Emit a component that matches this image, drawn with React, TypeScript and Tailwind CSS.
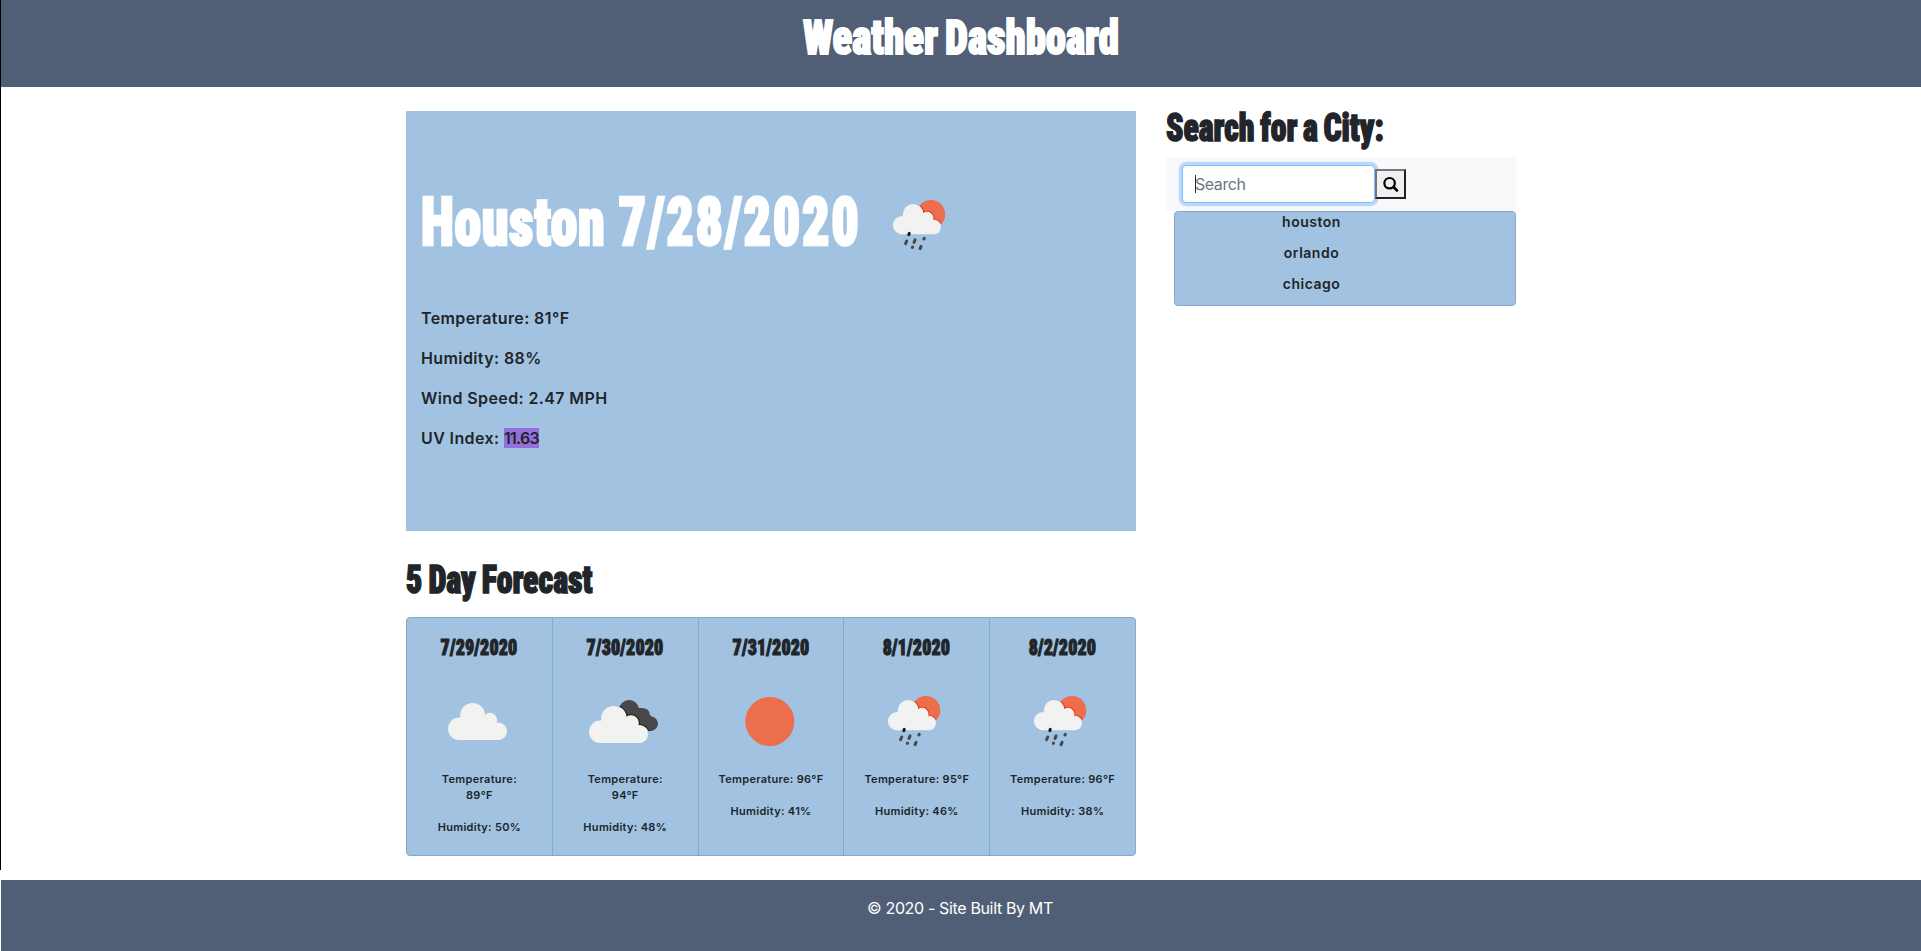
import type { ReactNode } from "react";

const display =
  "inline-block whitespace-nowrap font-['Roboto','Liberation_Sans',sans-serif] font-black [font-stretch:75%]";
const body = "font-['Inter','Liberation_Sans',sans-serif] font-semibold text-[#212529]";

function CloudShape({ fill }: { fill: string }) {
  return (
    <g fill={fill}>
      <circle cx="43.6" cy="43.3" r="12.4" />
      <circle cx="61" cy="48" r="7.2" />
      <circle cx="30.2" cy="56.8" r="11.2" />
      <circle cx="69.3" cy="59.3" r="8.7" />
      <path d="M31 45H56L65 50L70 54V68H30Z" />
    </g>
  );
}

function Box({ children }: { children: ReactNode }) {
  return (
    <svg className="block size-[100px] shrink-0" viewBox="0 0 100 100">
      {children}
    </svg>
  );
}

function CloudIcon() {
  return (
    <Box>
      <CloudShape fill="#f2f2f0" />
    </Box>
  );
}

function SunIcon() {
  return (
    <Box>
      <circle cx="48.8" cy="49.5" r="24.5" fill="#ec6e4c" />
    </Box>
  );
}

function BrokenCloudsIcon() {
  return (
    <Box>
      <clipPath id="dark-cloud">
        <circle cx="54" cy="38" r="10" />
        <circle cx="68.6" cy="42.3" r="6.1" />
        <circle cx="75.8" cy="51.7" r="7.2" />
        <path d="M54 36H68L77 45V58.9H60Z" />
      </clipPath>
      <g clipPath="url(#dark-cloud)">
        <rect width="100" height="100" fill="#48484a" />
        <g fill="none" stroke="#1f1f20" strokeWidth="3.4">
          <circle cx="38.6" cy="46.3" r="12.4" />
          <circle cx="56" cy="51" r="7.2" />
          <circle cx="64.3" cy="62.3" r="8.7" />
        </g>
        <g fill="none" stroke="#ffffff" strokeWidth="1.2">
          <circle cx="38.6" cy="46.3" r="12.4" />
          <circle cx="56" cy="51" r="7.2" />
          <circle cx="64.3" cy="62.3" r="8.7" />
        </g>
      </g>
      <g transform="translate(-5 3)">
        <CloudShape fill="#f2f2f0" />
      </g>
    </Box>
  );
}

function RainIcon({ id, shift = 0 }: { id: string; shift?: number }) {
  return (
    <Box>
      <g transform={`translate(${shift} 0)`}>
        <clipPath id={id}>
          <circle cx="60" cy="38.2" r="14.2" />
        </clipPath>
        <g clipPath={`url(#${id})`}>
          <rect width="100" height="100" fill="#ec6e4c" />
          <g transform="translate(6.5 3) scale(.813)" fill="none" stroke="#e03c1c" strokeWidth="3.6">
            <circle cx="43.6" cy="43.3" r="12.4" />
            <circle cx="61" cy="48" r="7.2" />
            <circle cx="69.3" cy="59.3" r="8.7" />
          </g>
          <g transform="translate(6.5 3) scale(.813)" fill="none" stroke="#ffffff" strokeWidth="1.2">
            <circle cx="43.6" cy="43.3" r="12.4" />
            <circle cx="61" cy="48" r="7.2" />
            <circle cx="69.3" cy="59.3" r="8.7" />
          </g>
        </g>
        <g transform="translate(6.5 3) scale(.813)">
          <CloudShape fill="#f2f2f2" />
        </g>
        <g stroke="#48484a" strokeWidth="3" strokeLinecap="round">
          <path d="M38.3 57.4L37.8 58.6" stroke="#1a1a1a" />
          <path d="M35.7 65L34.6 67.6M44.1 63.8L43 66.4M50.1 70.4L49.1 72.6" />
          <path d="M53.3 62.2L52.9 62.9M41.6 71L41.3 71.5" />
        </g>
      </g>
    </Box>
  );
}

const days = [
  { date: "7/29/2020", icon: <CloudIcon />, temp: "89°F", humidity: "50%", wrap: true },
  { date: "7/30/2020", icon: <BrokenCloudsIcon />, temp: "94°F", humidity: "48%", wrap: true },
  { date: "7/31/2020", icon: <SunIcon />, temp: "96°F", humidity: "41%", wrap: false },
  { date: "8/1/2020", icon: <RainIcon id="sun-day-4" shift={-1} />, temp: "95°F", humidity: "46%", wrap: false },
  { date: "8/2/2020", icon: <RainIcon id="sun-day-5" shift={-1} />, temp: "96°F", humidity: "38%", wrap: false },
];

function CurrentWeather() {
  return (
    <section className="h-[420px] bg-[#a1c3e1] pt-[65px] pl-[15px]">
      <div className="flex h-[100px]">
        <h1 className="w-[450px] shrink-0 leading-[92px] text-white">
          <span
            className={`${display} origin-left scale-x-[.81] text-[66.5px] [-webkit-text-stroke:2.6px_white]`}
          >
            <span className="tracking-[.8px]">Houston </span>
            <span className="tracking-[2.2px]">7/28/2020</span>
          </span>
        </h1>
        <RainIcon id="sun-now" />
      </div>
      <div className={`${body} mt-[30px] flex flex-col gap-4 text-base leading-6 tracking-[.39px]`}>
        <p>Temperature: 81°F</p>
        <p>Humidity: 88%</p>
        <p>Wind Speed: 2.47 MPH</p>
        <p>
          UV Index: <span className="bg-[#9370db] tracking-[-.7px]">11.63</span>
        </p>
      </div>
    </section>
  );
}

function Forecast() {
  return (
    <section>
      <h2 className="mt-[25px] h-12 leading-[48px] text-[#212529]">
        <span
          className={`${display} origin-left scale-x-[.84] text-[38px] [-webkit-text-stroke:1.5px_#212529] [word-spacing:-1.5px]`}
        >
          5 Day Forecast
        </span>
      </h2>
      <div className="mt-[13px] flex h-[239px] overflow-hidden rounded-[4px] border border-[#86a9c8] bg-[#a1c3e1]">
        {days.map((d) => (
          <div
            key={d.date}
            className="flex flex-1 flex-col items-center border-r border-[#86a9c8] pt-[19px] text-center last:border-r-0"
          >
            <h5 className="h-5 leading-[21px] text-[#212529]">
              <span
                className={`${display} scale-x-[.835] text-[21.5px] [-webkit-text-stroke:1.1px_#212529] tracking-[.2px]`}
              >
                {d.date}
              </span>
            </h5>
            <div className="mt-[15px]">{d.icon}</div>
            <div className={`${body} -mt-px text-[11px] leading-4 tracking-[.3px]`}>
              <p>
                Temperature: {d.wrap && <br />}
                {d.temp}
              </p>
              <p className="mt-4">Humidity: {d.humidity}</p>
            </div>
          </div>
        ))}
      </div>
    </section>
  );
}

function SearchPanel() {
  return (
    <aside className="w-[350px]">
      <h2 className="h-[46px] leading-[47px] text-[#212529] -mt-[6px]">
        <span
          className={`${display} origin-left scale-x-[.835] text-[38px] [-webkit-text-stroke:1.5px_#212529] [word-spacing:-2px]`}
        >
          Search for a City:
        </span>
      </h2>
      <div className="mt-[6px] flex h-[54px] items-start bg-[#f8f9fa] pt-2 pl-4">
        <div className="flex h-[38px] w-[193px] items-center rounded-[4px] border border-[#80bdff] bg-white pl-3 shadow-[0_0_0_3.2px_rgba(0,123,255,.25)]">
          <span className="-mr-px h-[18px] w-px bg-[#212529]" />
          <span className="font-['Inter','Liberation_Sans',sans-serif] text-base tracking-[-.45px] text-[#6c757d]">
            Search
          </span>
        </div>
        <button
          aria-label="Search city"
          className="mt-1 flex h-[30px] w-[31px] items-center justify-center border-2 border-t-[#767676] border-r-[#212121] border-b-[#212121] border-l-[#767676] bg-[#efefef]"
        >
          <svg className="size-4" viewBox="0 0 16 16" fill="none" stroke="#000000">
            <circle cx="6.6" cy="7.2" r="5.2" strokeWidth="2.2" />
            <path d="M10.5 11L14 14.5" strokeWidth="2.6" strokeLinecap="round" />
          </svg>
        </button>
      </div>
      <ul
        className={`${body} ml-2 flex h-[95px] flex-col gap-[10px] rounded-[4px] border border-[#86a9c8] bg-[#a1c3e1] text-center text-sm leading-[21px] tracking-[.5px]`}
      >
        <li className="-mt-px mb-px w-[273px]">houston</li>
        <li className="-mt-px mb-px w-[273px]">orlando</li>
        <li className="-mt-px mb-px w-[273px]">chicago</li>
      </ul>
    </aside>
  );
}

export default function App() {
  return (
    <div className="flex h-[951px] w-[1921px] items-start overflow-hidden bg-white">
      <div className="h-[870px] w-px bg-black" />
      <div className="w-[1920px]">
        <header className="flex h-[87px] justify-center bg-[#505f75]">
          <h1 className="leading-[76px] text-white">
            <span
              className={`${display} scale-x-[.85] text-[48px] [-webkit-text-stroke:1.9px_white] [word-spacing:-3px]`}
            >
              Weather Dashboard
            </span>
          </h1>
        </header>
        <main className="mt-6 ml-[405px] flex w-[1110px] gap-[30px]">
          <div className="w-[730px]">
            <CurrentWeather />
            <Forecast />
          </div>
          <SearchPanel />
        </main>
        <footer className="mt-6 h-[71px] bg-[#505f75] pt-4 pr-0.5 text-center font-['Inter','Liberation_Sans',sans-serif] text-base leading-6 tracking-[-.35px] text-white">
          © 2020 - Site Built By MT
        </footer>
      </div>
    </div>
  );
}
